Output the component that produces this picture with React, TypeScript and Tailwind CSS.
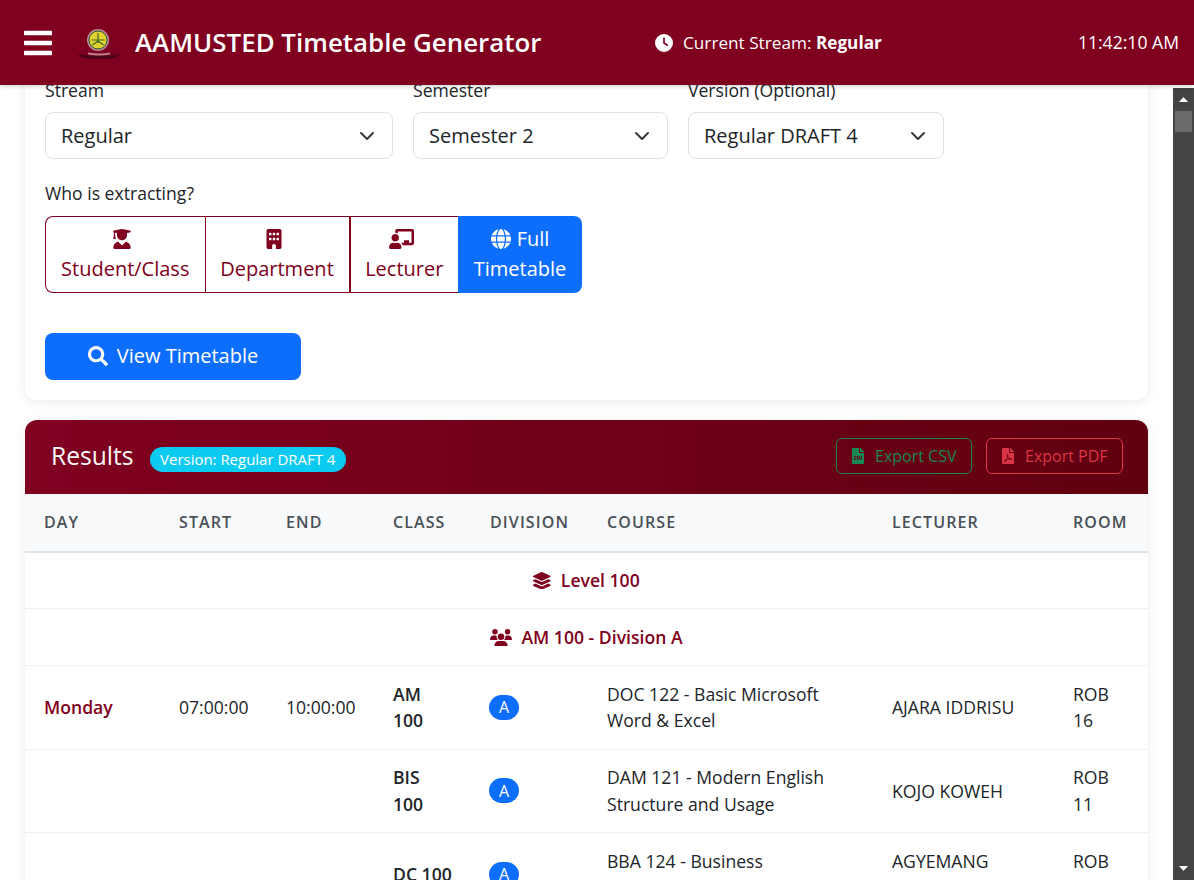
import React from "react";
import {
  FaClock, FaUserGraduate, FaBuilding, FaGlobe, FaUsers,
} from "react-icons/fa6";
import { FaBars, FaChalkboardTeacher, FaSearch, FaFileCsv, FaFilePdf, FaLayerGroup } from "react-icons/fa";

function Select({ label, value, width }: { label: string; value: string; width: string }) {
  return (
    <div className={width}>
      <div className="text-[17.6px] leading-[26.4px] mb-[9px] text-[#212529]">{label}</div>
      <div className="h-[47px] rounded-[8px] border border-[#dee2e6] bg-white pl-[15px] pr-[17px] flex items-center justify-between text-[20px] text-[#212529]">
        <span>{value}</span>
        <svg width="16" height="16" viewBox="0 0 16 16" fill="none" stroke="#343a40" strokeWidth="2" strokeLinecap="round" strokeLinejoin="round">
          <path d="m2 5 6 6 6-6" />
        </svg>
      </div>
    </div>
  );
}

function Choice({ icon, label, className }: { icon: React.ReactNode; label: string; className: string }) {
  return (
    <div className={`border-y border-l border-[#800020] text-[#800020] text-[20px] leading-[30px] pt-[6.5px] pb-[8.5px] text-center ${className}`}>
      <div className="flex justify-center h-[30px] items-center text-[20px] pr-[6px]">{icon}</div>
      <div>{label}</div>
    </div>
  );
}

function Logo() {
  return (
    <svg width="44" height="44" viewBox="0 0 44 44" className="shrink-0">
      <path d="M1 33 Q22 37 43 33 L40 36.5 Q22 39.5 4 36.5 Z" fill="#4a0418" />
      <path d="M11 31.5 Q22 33.5 33 31.5 L33 33.5 Q22 35.5 11 33.5 Z" fill="#c9a3ad" opacity="0.8" />
      <circle cx="21" cy="19" r="11" fill="#b98a97" />
      <circle cx="21" cy="19" r="9" fill="#e2d22e" />
      <circle cx="21" cy="19" r="9" fill="none" stroke="#2e5a2a" strokeWidth="1" />
      <path d="M21 12v10M14.5 19h13M15.5 24l5.5-4 5.5 4" stroke="#39662f" strokeWidth="1.2" fill="none" />
    </svg>
  );
}

const th = "text-left font-semibold px-[19px] text-[16px] tracking-[1.1px] uppercase text-[#495057]";
const td = "px-[19px] py-[14.75px] text-[17.6px] leading-[26.4px] text-[#212529] align-middle";
const group = "py-[14.75px] leading-[26.4px] text-center text-[17.6px] font-[570] text-[#800020]";

function Division() {
  return (
    <span className="inline-flex -ml-[1px] w-[30px] h-[25px] rounded-full bg-[#0d6efd] text-white text-[16px] items-center justify-center">A</span>
  );
}

function Row({ day, start, end, cls, course, lecturer, room }: { day?: string; start?: string; end?: string; cls: string; course: string; lecturer: string; room: string }) {
  return (
    <tr className="border-b border-[#f0f0f0]">
      <td className={`${td} !text-[#800020] font-[570]`}>{day}</td>
      <td className={td}>{start}</td>
      <td className={td}>{end}</td>
      <td className={`${td} font-semibold`}>{cls}</td>
      <td className={td}><div className="flex"><Division /></div></td>
      <td className={td}>{course}</td>
      <td className={td}>{lecturer}</td>
      <td className={td}>{room}</td>
    </tr>
  );
}

export default function App() {
  return (
    <div className="h-[880px] w-[1194px] overflow-hidden flex flex-col bg-white" style={{ fontFamily: '"Open Sans", sans-serif' }}>
      <header className="relative z-10 h-[85px] shrink-0 bg-[#800020] text-white flex items-center shadow-[0_2px_4px_rgba(0,0,0,0.15)]">
        <FaBars className="ml-[24px] w-[28px] h-[32px]" />
        <div className="ml-[25px]"><Logo /></div>
        <div className="ml-[14px] w-[520px] text-[25.9px] font-semibold leading-none whitespace-nowrap">AAMUSTED Timetable Generator</div>
        <FaClock className="text-[18px]" />
        <div className="ml-[10px] text-[17.2px] whitespace-nowrap">Current Stream: <span className="font-bold">Regular</span></div>
        <div className="ml-auto mr-[15px] text-[17.6px] whitespace-nowrap">11:42:10 AM</div>
      </header>
      <div className="flex-1 min-h-0 flex">
        <main className="flex-1 min-w-0 overflow-hidden pl-[25px] pr-[25px]">
          <section className="-mt-[8.4px] rounded-b-[12px] bg-white shadow-[0_2px_12px_rgba(0,0,0,0.08)] px-[20px] pb-[20px] pt-0">
            <div className="flex gap-[20px]">
              <Select label="Stream" value="Regular" width="w-[348px]" />
              <Select label="Semester" value="Semester 2" width="w-[255px]" />
              <Select label="Version (Optional)" value="Regular DRAFT 4" width="w-[256px]" />
            </div>
            <div className="mt-[21px] text-[17.6px] leading-[26.4px] text-[#212529]">Who is extracting?</div>
            <div className="mt-[9.6px] flex">
              <Choice className="rounded-l-[8px] w-[159.5px]" icon={<FaUserGraduate />} label="Student/Class" />
              <Choice className="w-[144px]" icon={<FaBuilding />} label="Department" />
              <Choice className="w-[109.5px] !border-l-2" icon={<FaChalkboardTeacher className="w-[25px] h-[20px]" />} label="Lecturer" />
              <div className="w-[124px] rounded-r-[8px] bg-[#0d6efd] text-white text-[20px] leading-[30px] pt-[7.5px] pb-[9.5px] text-center">
                <FaGlobe className="inline text-[20px] align-[-3px] mr-[6px]" />Full<br />Timetable
              </div>
            </div>
            <div className="mt-[40px] w-[256px] h-[47px] pb-[2px] rounded-[8px] bg-[#0d6efd] text-white text-[20px] flex items-center justify-center gap-[9px]">
              <FaSearch className="text-[20px]" />View Timetable
            </div>
          </section>
          <section className="mt-[20px] rounded-t-[12px] bg-white shadow-[0_2px_12px_rgba(0,0,0,0.08)]">
            <div className="h-[74px] rounded-t-[12px] bg-gradient-to-r from-[#800020] to-[#600010] flex items-center pl-[26px] pr-[25px]">
              <span className="-mt-[2px] text-[24.64px] text-[#f8f9fa]">Results</span>
              <span className="ml-[16px] mt-[4px] h-[25px] px-[10.5px] rounded-full bg-[#0dcaf0] text-white text-[14.96px] flex items-center whitespace-nowrap">Version: Regular DRAFT 4</span>
              <div className="ml-auto -mt-[2px] flex items-center gap-[14px] text-[16px]">
                <div className="h-[36px] w-[136px] rounded-[6px] border border-[#198754] text-[#198754] flex items-center pl-[15px] gap-[11px]"><FaFileCsv className="w-[12px] h-[16px]" />Export CSV</div>
                <div className="h-[36px] w-[137px] rounded-[6px] border border-[#dc3545] text-[#dc3545] flex items-center pl-[15px] gap-[11px]"><FaFilePdf className="w-[12px] h-[16px]" />Export PDF</div>
              </div>
            </div>
            <table className="w-full table-fixed border-collapse">
              <colgroup>
                <col className="w-[135px]" /><col className="w-[107px]" /><col className="w-[107px]" /><col className="w-[97px]" />
                <col className="w-[117px]" /><col className="w-[285px]" /><col className="w-[181px]" /><col className="w-[94px]" />
              </colgroup>
              <thead>
                <tr className="h-[57.5px] bg-[#f8f9fa] border-b-2 border-[#dee2e6]">
                  {["Day", "Start", "End", "Class", "Division", "Course", "Lecturer", "Room"].map((h) => (
                    <th key={h} className={th}>{h}</th>
                  ))}
                </tr>
              </thead>
              <tbody>
                <tr className="border-b border-[#f0f0f0]">
                  <td colSpan={8} className={group}>
                    <FaLayerGroup className="inline text-[17.6px] mr-[10px] align-[-2px]" />Level 100
                  </td>
                </tr>
                <tr className="border-b border-[#f0f0f0]">
                  <td colSpan={8} className={group}>
                    <FaUsers className="inline w-[22px] h-[17.6px] mr-[9px] align-[-2px]" />AM 100 - Division A
                  </td>
                </tr>
                <Row day="Monday" start="07:00:00" end="10:00:00" cls="AM 100" course="DOC 122 - Basic Microsoft Word & Excel" lecturer="AJARA IDDRISU" room="ROB 16" />
                <Row cls="BIS 100" course="DAM 121 - Modern English Structure and Usage" lecturer="KOJO KOWEH" room="ROB 11" />
                <Row cls="DC 100" course="BBA 124 - Business Management" lecturer="AGYEMANG BOATENG" room="ROB 12" />
              </tbody>
            </table>
          </section>
        </main>
        <aside className="w-[21px] shrink-0 mt-[3px] bg-[#444444] flex flex-col items-center">
          <svg width="9" height="5" viewBox="0 0 9 5" className="mt-[9px]"><path d="M4.5 0 9 5H0Z" fill="#fff" /></svg>
          <div className="mt-[9px] w-[17px] h-[21px] bg-[#6b6b6b]" />
          <div className="flex-1" />
          <svg width="9" height="5" viewBox="0 0 9 5" className="mb-[9px]"><path d="M0 0H9L4.5 5Z" fill="#fff" /></svg>
        </aside>
      </div>
    </div>
  );
}
